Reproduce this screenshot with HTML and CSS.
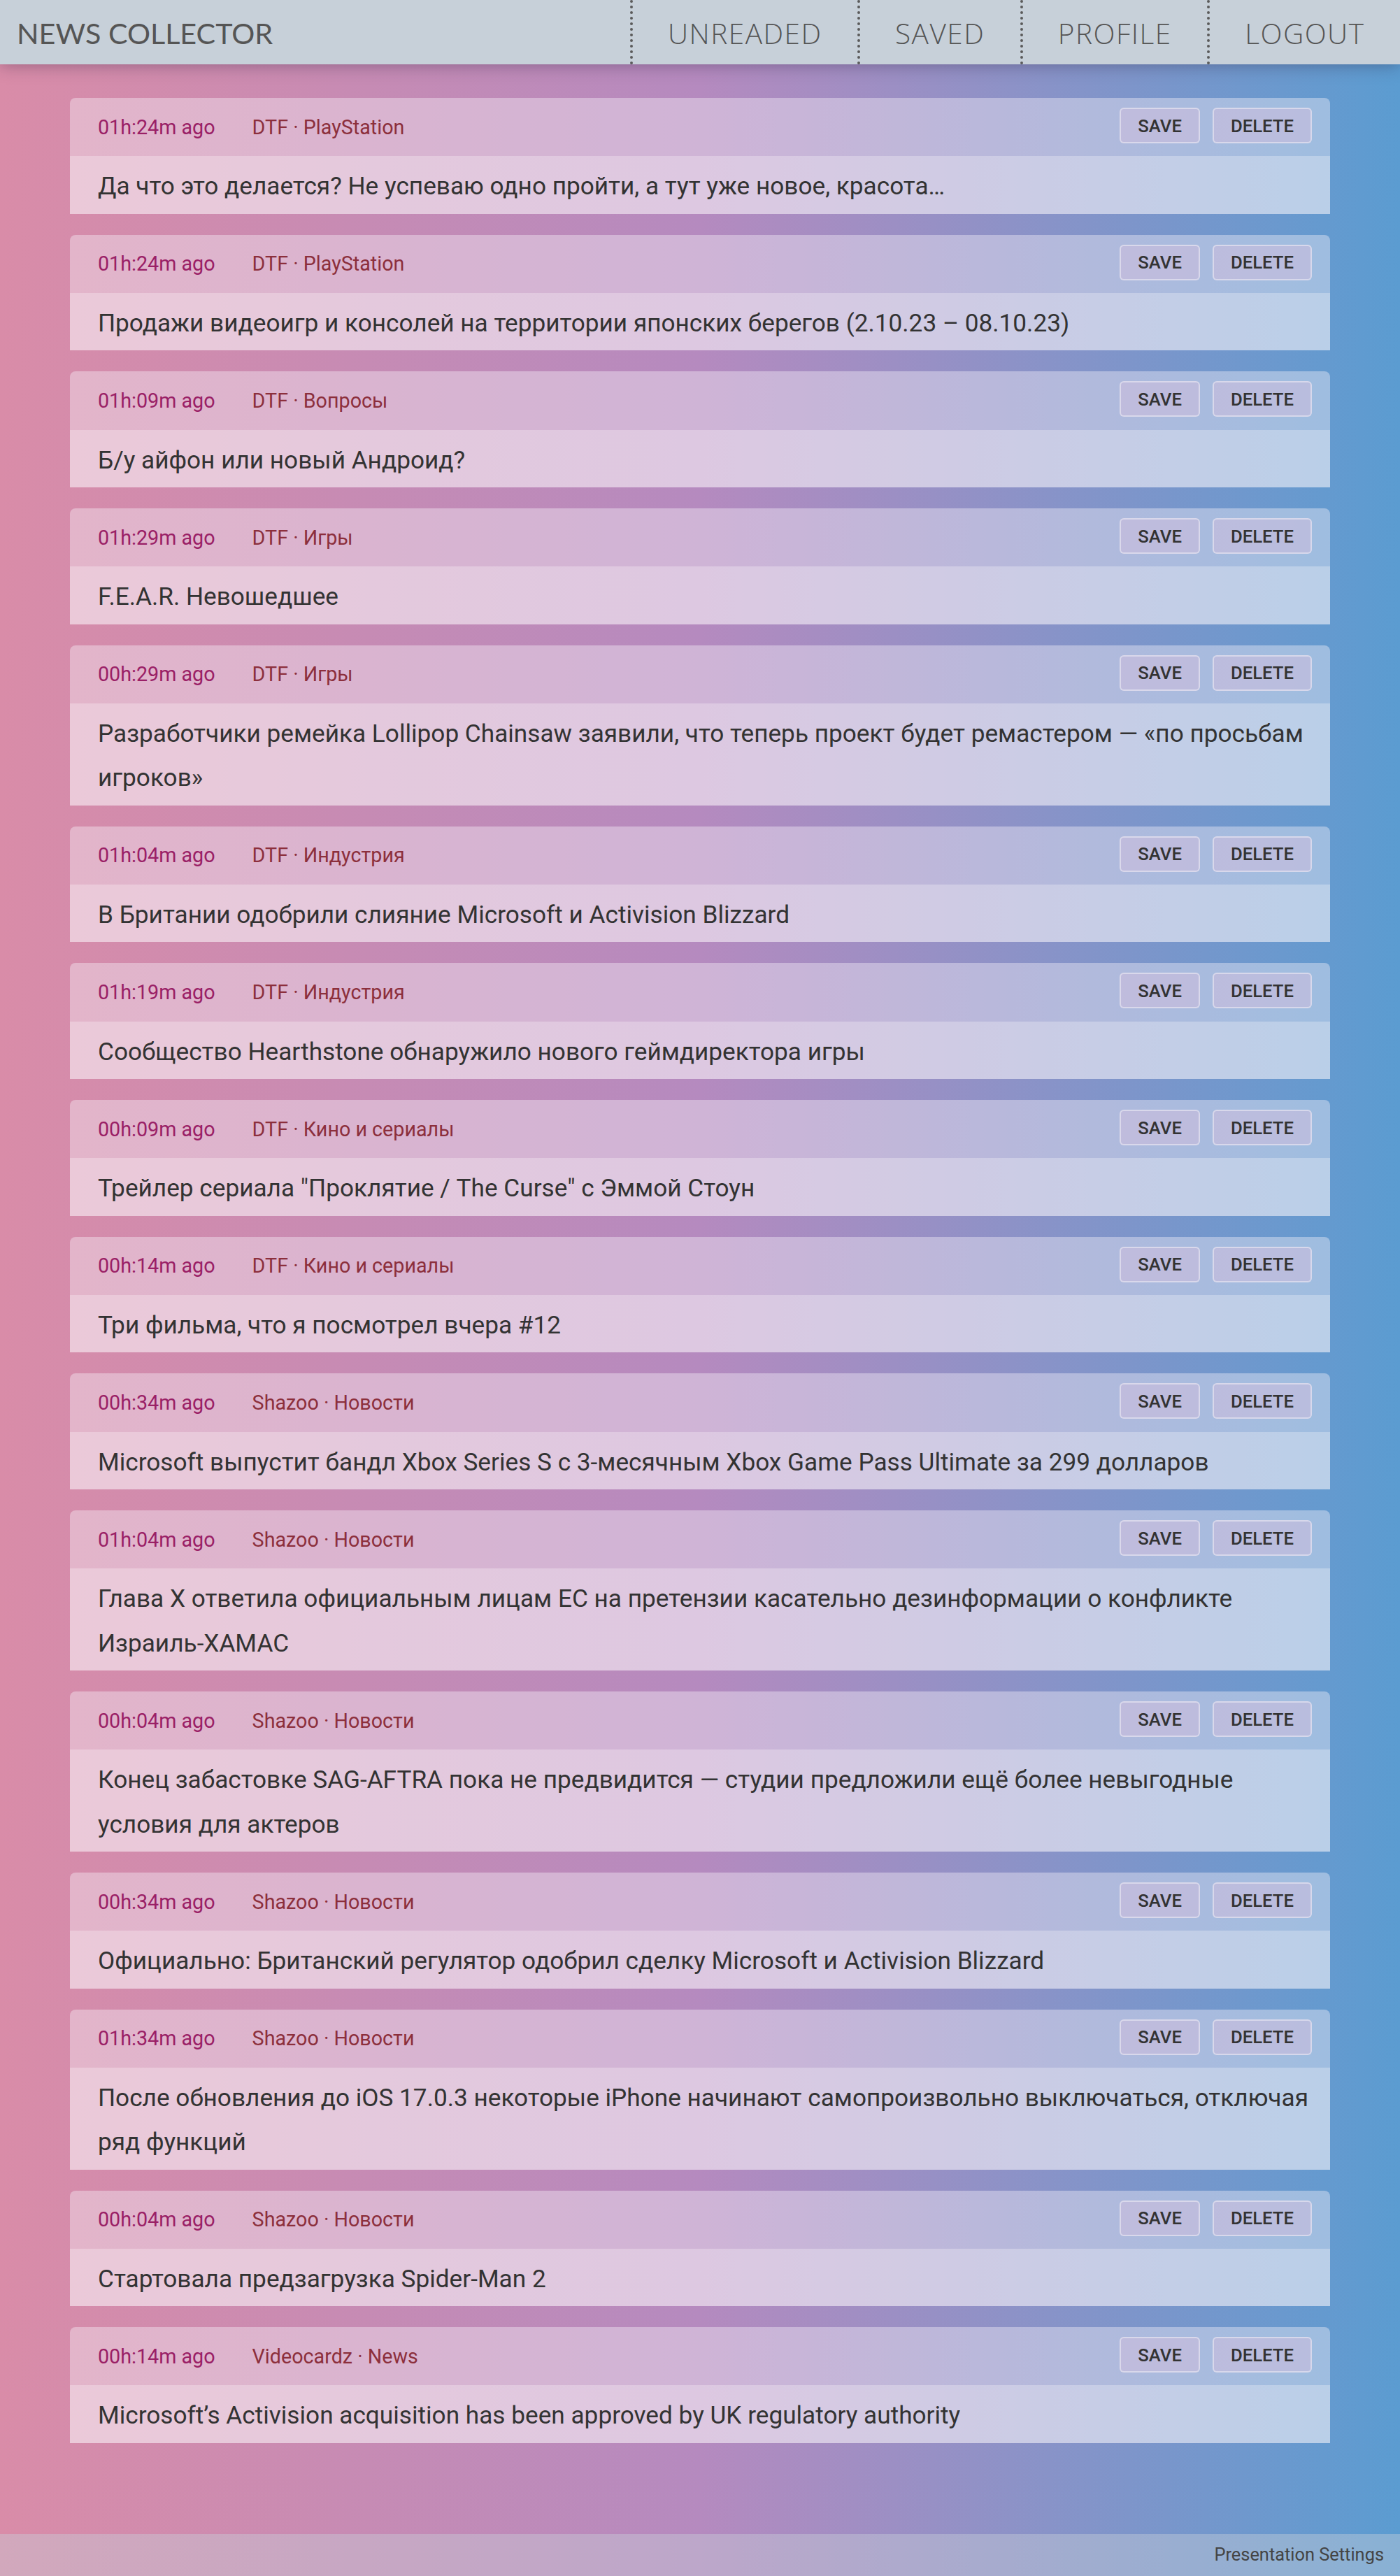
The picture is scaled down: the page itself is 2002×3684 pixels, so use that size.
FILE: index.html
```html
<!DOCTYPE html>
<html lang="ru">
<head>
<meta charset="utf-8">
<title>News Collector</title>
<link rel="stylesheet" href="styles.css">
</head>
<body>
<header class="topbar">
  <div class="brand">NEWS COLLECTOR</div>
  <nav class="nav">
    <a class="nav-item" href="#">UNREADED</a>
    <a class="nav-item" href="#">SAVED</a>
    <a class="nav-item" href="#">PROFILE</a>
    <a class="nav-item" href="#">LOGOUT</a>
  </nav>
</header>
<main class="feed">
  <article class="card"><div class="card-head"><span class="time">01h:24m ago</span><span class="source">DTF · PlayStation</span><div class="actions"><button class="btn">SAVE</button><button class="btn">DELETE</button></div></div><div class="card-body">Да что это делается? Не успеваю одно пройти, а тут уже новое, красота…</div></article>
  <article class="card"><div class="card-head"><span class="time">01h:24m ago</span><span class="source">DTF · PlayStation</span><div class="actions"><button class="btn">SAVE</button><button class="btn">DELETE</button></div></div><div class="card-body">Продажи видеоигр и консолей на территории японских берегов (2.10.23 – 08.10.23)</div></article>
  <article class="card"><div class="card-head"><span class="time">01h:09m ago</span><span class="source">DTF · Вопросы</span><div class="actions"><button class="btn">SAVE</button><button class="btn">DELETE</button></div></div><div class="card-body">Б/у айфон или новый Андроид?</div></article>
  <article class="card"><div class="card-head"><span class="time">01h:29m ago</span><span class="source">DTF · Игры</span><div class="actions"><button class="btn">SAVE</button><button class="btn">DELETE</button></div></div><div class="card-body">F.E.A.R. Невошедшее</div></article>
  <article class="card"><div class="card-head"><span class="time">00h:29m ago</span><span class="source">DTF · Игры</span><div class="actions"><button class="btn">SAVE</button><button class="btn">DELETE</button></div></div><div class="card-body">Разработчики ремейка Lollipop Chainsaw заявили, что теперь проект будет ремастером — «по просьбам игроков»</div></article>
  <article class="card"><div class="card-head"><span class="time">01h:04m ago</span><span class="source">DTF · Индустрия</span><div class="actions"><button class="btn">SAVE</button><button class="btn">DELETE</button></div></div><div class="card-body">В Британии одобрили слияние Microsoft и Activision Blizzard</div></article>
  <article class="card"><div class="card-head"><span class="time">01h:19m ago</span><span class="source">DTF · Индустрия</span><div class="actions"><button class="btn">SAVE</button><button class="btn">DELETE</button></div></div><div class="card-body">Сообщество Hearthstone обнаружило нового геймдиректора игры</div></article>
  <article class="card"><div class="card-head"><span class="time">00h:09m ago</span><span class="source">DTF · Кино и сериалы</span><div class="actions"><button class="btn">SAVE</button><button class="btn">DELETE</button></div></div><div class="card-body">Трейлер сериала "Проклятие / The Curse" с Эммой Стоун</div></article>
  <article class="card"><div class="card-head"><span class="time">00h:14m ago</span><span class="source">DTF · Кино и сериалы</span><div class="actions"><button class="btn">SAVE</button><button class="btn">DELETE</button></div></div><div class="card-body">Три фильма, что я посмотрел вчера #12</div></article>
  <article class="card"><div class="card-head"><span class="time">00h:34m ago</span><span class="source">Shazoo · Новости</span><div class="actions"><button class="btn">SAVE</button><button class="btn">DELETE</button></div></div><div class="card-body">Microsoft выпустит бандл Xbox Series S с 3-месячным Xbox Game Pass Ultimate за 299 долларов</div></article>
  <article class="card"><div class="card-head"><span class="time">01h:04m ago</span><span class="source">Shazoo · Новости</span><div class="actions"><button class="btn">SAVE</button><button class="btn">DELETE</button></div></div><div class="card-body">Глава X ответила официальным лицам ЕС на претензии касательно дезинформации о конфликте Израиль-ХАМАС</div></article>
  <article class="card"><div class="card-head"><span class="time">00h:04m ago</span><span class="source">Shazoo · Новости</span><div class="actions"><button class="btn">SAVE</button><button class="btn">DELETE</button></div></div><div class="card-body">Конец забастовке SAG-AFTRA пока не предвидится — студии предложили ещё более невыгодные условия для актеров</div></article>
  <article class="card"><div class="card-head"><span class="time">00h:34m ago</span><span class="source">Shazoo · Новости</span><div class="actions"><button class="btn">SAVE</button><button class="btn">DELETE</button></div></div><div class="card-body">Официально: Британский регулятор одобрил сделку Microsoft и Activision Blizzard</div></article>
  <article class="card"><div class="card-head"><span class="time">01h:34m ago</span><span class="source">Shazoo · Новости</span><div class="actions"><button class="btn">SAVE</button><button class="btn">DELETE</button></div></div><div class="card-body">После обновления до iOS 17.0.3 некоторые iPhone начинают самопроизвольно выключаться, отключая ряд функций</div></article>
  <article class="card"><div class="card-head"><span class="time">00h:04m ago</span><span class="source">Shazoo · Новости</span><div class="actions"><button class="btn">SAVE</button><button class="btn">DELETE</button></div></div><div class="card-body">Стартовала предзагрузка Spider-Man 2</div></article>
  <article class="card"><div class="card-head"><span class="time">00h:14m ago</span><span class="source">Videocardz · News</span><div class="actions"><button class="btn">SAVE</button><button class="btn">DELETE</button></div></div><div class="card-body">Microsoft’s Activision acquisition has been approved by UK regulatory authority</div></article>
</main>
<footer class="footbar">
  <span class="foot-link">Presentation Settings</span>
</footer>
</body>
</html>
```

FILE: styles.css
```css
* { box-sizing: border-box; }

html, body {
  margin: 0;
  padding: 0;
}

body {
  font-family: Roboto, "Noto Sans", "Liberation Sans", sans-serif;
  color: #333;
  background: linear-gradient(to right, #d98ca8 0%, #b58abf 50%, #5b9cd1 100%);
  min-height: 100vh;
}

.topbar {
  position: relative;
  z-index: 2;
  height: 92px;
  background: #c7d0d9;
  display: flex;
  align-items: stretch;
  justify-content: space-between;
  box-shadow: 0 2px 22px rgba(40, 30, 60, 0.35);
}

.brand {
  font-family: Lato, "Open Sans", sans-serif;
  font-weight: 400;
  font-size: 41.3px;
  color: #555;
  display: flex;
  align-items: center;
  padding-left: 24px;
  padding-top: 2px;
}

.nav {
  display: flex;
  align-items: stretch;
}

.nav-item {
  font-family: "Open Sans", Lato, sans-serif;
  font-weight: 300;
  font-size: 40.5px;
  letter-spacing: 1.5px;
  color: #555;
  text-decoration: none;
  display: flex;
  align-items: center;
  padding: 2px 50.5px 0 50px;
  border-left: 4px dotted #5a5a5a;
}

.feed {
  padding: 48px 100px 130px;
  display: flex;
  flex-direction: column;
  gap: 30px;
}

.card {
  border-radius: 8px 8px 0 0;
  overflow: hidden;
}

.card-head {
  height: 83.33px;
  background: rgba(248, 242, 250, 0.4);
  display: flex;
  align-items: center;
  padding: 0 26px 0 40px;
  font-size: 28.7px;
}

.time {
  color: #9a2066;
  margin-right: 53px;
}

.source {
  color: #8c2f3c;
}

.actions {
  margin-left: auto;
  display: flex;
  gap: 18px;
  margin-top: -4px;
}

.btn {
  font-family: Roboto, "Liberation Sans", sans-serif;
  font-weight: 500;
  font-size: 25.7px;
  color: #333;
  height: 51px;
  padding: 0 24px;
  background: rgba(205, 190, 220, 0.55);
  border: 2px solid rgba(235, 235, 245, 0.6);
  border-radius: 6px;
  cursor: pointer;
}

.card-body {
  background: rgba(252, 248, 252, 0.57);
  padding: 12px 22px 7px 40px;
  font-size: 35.2px;
  line-height: 63.33px;
  color: #333;
}

.footbar {
  height: 60px;
  background: rgba(199, 208, 217, 0.42);
  display: flex;
  align-items: center;
  justify-content: flex-end;
  padding: 0 23px 2px 0;
  font-size: 25.4px;
  color: #444;
}
```
